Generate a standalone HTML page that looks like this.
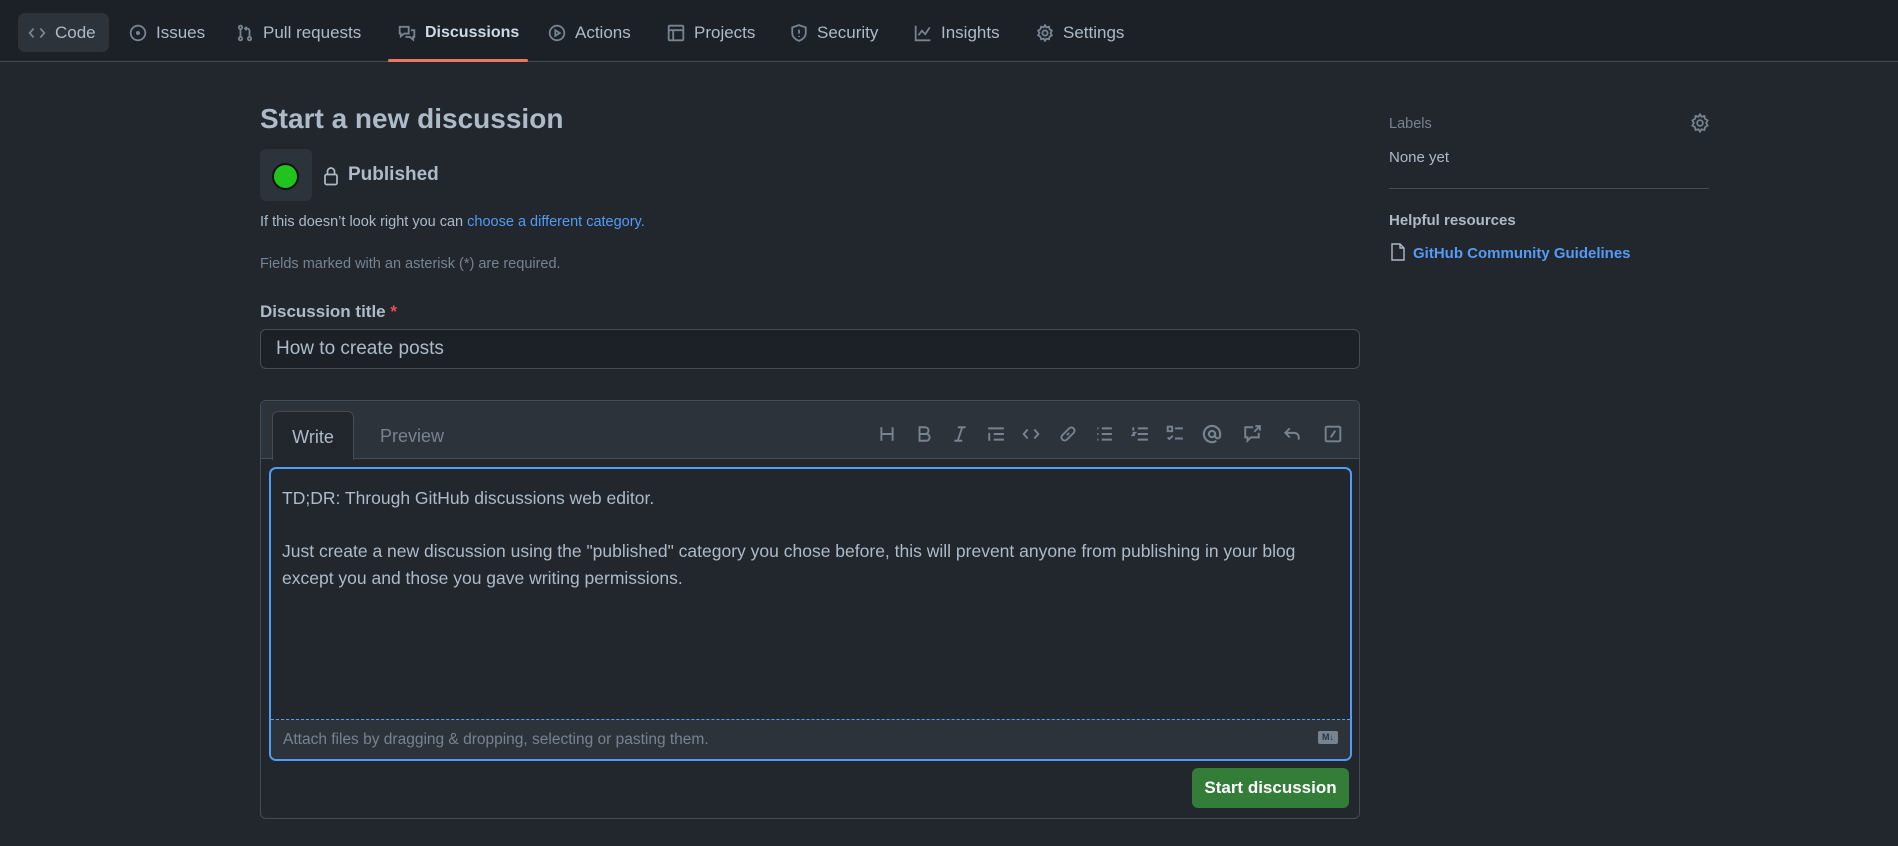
<!DOCTYPE html>
<html><head><meta charset="utf-8"><style>
*{box-sizing:border-box;margin:0;padding:0}
body{width:1898px;height:846px;background:#22272e;font-family:"Liberation Sans",sans-serif;color:#adbac7;position:relative;overflow:hidden}
.hdr{position:absolute;left:0;top:0;width:1898px;height:62px;background:#1c2128;border-bottom:1px solid #444c56}
.tab{position:absolute;top:13px;height:39px;display:flex;align-items:center;font-size:17px;color:#adbac7;gap:9px}
.tab svg{width:18px;height:18px;fill:none;stroke:#768390;stroke-width:1.6}
.abs{position:absolute}
.ic svg{fill:none;stroke:#768390;stroke-width:1.7}
</style></head><body>
<div class="hdr">
<div class="abs" style="left:18px;top:13px;width:91px;height:39px;background:#2d333b;border-radius:7px"></div>
<div class="tab" style="left:28px"><svg viewBox="0 0 16 16"><path d="M5 4L1.5 8 5 12M11 4l3.5 4L11 12"/></svg>Code</div>
<div class="tab" style="left:129px"><svg viewBox="0 0 16 16"><circle cx="8" cy="8" r="6.5"/><circle cx="8" cy="8" r="1" fill="#768390"/></svg>Issues</div>
<div class="tab" style="left:236px"><svg viewBox="0 0 16 16"><circle cx="4" cy="3" r="1.5"/><circle cx="4" cy="13" r="1.5"/><circle cx="12" cy="13" r="1.5"/><path d="M4 4.5v7M12 11.5V6a2 2 0 0 0-2-2H8M9.5 2.5L8 4l1.5 1.5"/></svg>Pull requests</div>
<div class="tab" style="left:398px;color:#cdd9e5;font-weight:bold;font-size:16px"><svg viewBox="0 0 16 16"><path d="M1.5 2.5h8v6h-4l-3 2.5v-2.5h-1zM11.5 5.5h3v6h-1v2.5l-3-2.5h-3v-1"/></svg>Discussions</div>
<div class="abs" style="left:388px;top:59px;width:140px;height:3px;background:#ec775c;border-radius:2px"></div>
<div class="tab" style="left:548px"><svg viewBox="0 0 16 16"><circle cx="8" cy="8" r="6.5"/><path d="M6.5 5.5v5l4-2.5z"/></svg>Actions</div>
<div class="tab" style="left:667px"><svg viewBox="0 0 16 16"><rect x="1.5" y="1.5" width="13" height="13" rx="1"/><path d="M1.5 5.5h13M5.5 5.5v9"/></svg>Projects</div>
<div class="tab" style="left:790px"><svg viewBox="0 0 16 16"><path d="M8 1l6 2v5c0 3.5-3 6-6 7-3-1-6-3.5-6-7V3z"/><path d="M8 5v3.5M8 10.5v1"/></svg>Security</div>
<div class="tab" style="left:914px"><svg viewBox="0 0 16 16"><path d="M1.5 1.5v13h13M4 10l3-4 3 3 4-6"/></svg>Insights</div>
<div class="tab" style="left:1036px"><svg viewBox="0 0 16 16"><circle cx="8" cy="8" r="2.3"/><path d="M8 1l1.2 2 2.3-.6.6 2.3 2 1.2-1.2 2.1 1.2 2.1-2 1.2-.6 2.3-2.3-.6L8 15l-1.2-2-2.3.6-.6-2.3-2-1.2L3.1 8 1.9 5.9l2-1.2.6-2.3 2.3.6z"/></svg>Settings</div>
</div>

<div class="abs" style="left:260px;top:103px;font-size:28px;font-weight:bold;color:#adbac7">Start a new discussion</div>
<div class="abs" style="left:260px;top:149px;width:52px;height:52px;background:#2d333b;border-radius:6px"></div>
<div class="abs" style="left:272px;top:163px;width:27px;height:27px;border-radius:50%;background:#1fc41f;border:2px solid #111"></div>
<svg class="abs" style="left:323px;top:166px" width="16" height="20" viewBox="0 0 16 20" fill="none" stroke="#adbac7" stroke-width="1.7"><rect x="2" y="8.5" width="12" height="10" rx="1.5"/><path d="M4.5 8.5V5.5a3.5 3.5 0 0 1 7 0v3"/></svg>
<div class="abs" style="left:348px;top:164px;font-size:19px;font-weight:bold;color:#adbac7">Published</div>
<div class="abs" style="left:260px;top:214px;font-size:14.5px;color:#adbac7">If this doesn’t look right you can <span style="color:#539bf5">choose a different category.</span></div>
<div class="abs" style="left:260px;top:256px;font-size:14.5px;color:#768390">Fields marked with an asterisk (*) are required.</div>
<div class="abs" style="left:260px;top:302px;font-size:17px;font-weight:bold;color:#adbac7">Discussion title <span style="color:#e5534b">*</span></div>
<div class="abs" style="left:260px;top:329px;width:1100px;height:40px;background:#1c2128;border:1px solid #444c56;border-radius:6px;font-size:19px;padding:8px 15px;color:#adbac7">How to create posts</div>

<div class="abs" style="left:260px;top:400px;width:1100px;height:419px;border:1px solid #444c56;border-radius:6px;background:#22272e"></div>
<div class="abs" style="left:261px;top:401px;width:1098px;height:58px;background:#2d333b;border-bottom:1px solid #444c56;border-radius:6px 6px 0 0"></div>
<div class="abs" style="left:272px;top:411px;width:82px;height:49px;background:#22272e;border:1px solid #444c56;border-bottom:none;border-radius:6px 6px 0 0;font-size:18px;color:#adbac7;text-align:center;padding-top:15px">Write</div>
<div class="abs" style="left:380px;top:426px;font-size:18px;color:#768390">Preview</div>
<div class="abs ic" style="left:0;top:0">
<svg class="abs" style="left:878px;top:425px" width="18" height="18" viewBox="0 0 16 16"><path d="M3 2v12M13 2v12M3 8h10"/></svg>
<svg class="abs" style="left:915px;top:425px" width="18" height="18" viewBox="0 0 16 16"><path d="M4 2h5a3 3 0 0 1 0 6H4zM4 8h6a3 3 0 0 1 0 6H4z"/></svg>
<svg class="abs" style="left:951px;top:425px" width="18" height="18" viewBox="0 0 16 16"><path d="M6 2h7M3 14h7M10 2L6 14"/></svg>
<svg class="abs" style="left:987px;top:425px" width="18" height="18" viewBox="0 0 16 16"><path d="M1 3h14M6 8h9M6 13h9M2 7v7"/></svg>
<svg class="abs" style="left:1022px;top:425px" width="18" height="18" viewBox="0 0 16 16"><path d="M5 4L1.5 8 5 12M11 4l3.5 4L11 12"/></svg>
<svg class="abs" style="left:1059px;top:425px" width="18" height="18" viewBox="0 0 16 16"><path d="M7 9l2-2M6 6l3-3a2.5 2.5 0 0 1 4 4l-3 3M10 10l-3 3a2.5 2.5 0 0 1-4-4l3-3"/></svg>
<svg class="abs" style="left:1095px;top:425px" width="18" height="18" viewBox="0 0 16 16"><path d="M6 3h9M6 8h9M6 13h9M2 3h1M2 8h1M2 13h1"/></svg>
<svg class="abs" style="left:1131px;top:425px" width="18" height="18" viewBox="0 0 16 16"><path d="M6 3h9M6 8h9M6 13h9M2 2v3M1.5 7h2l-2 2h2"/></svg>
<svg class="abs" style="left:1166px;top:425px" width="18" height="18" viewBox="0 0 16 16"><rect x="1.5" y="1.5" width="4" height="4"/><path d="M8 3h7M8 12h7M1.5 11l1.5 1.5 3-3"/></svg>
<svg class="abs" style="left:1202px;top:424px" width="20" height="20" viewBox="0 0 16 16"><circle cx="8" cy="8" r="2.5"/><path d="M10.5 8v1.5a2 2 0 0 0 4 0V8a6.5 6.5 0 1 0-3 5.5"/></svg>
<svg class="abs" style="left:1243px;top:425px" width="18" height="18" viewBox="0 0 16 16"><path d="M9 2H2v9h2v3l3-3h7V7M11 1h4v4M15 1l-5 5"/></svg>
<svg class="abs" style="left:1283px;top:425px" width="18" height="18" viewBox="0 0 16 16"><path d="M6 3L2 7l4 4M2 7h8a4 4 0 0 1 4 4v2"/></svg>
<svg class="abs" style="left:1324px;top:425px" width="18" height="18" viewBox="0 0 16 16"><rect x="1.5" y="1.5" width="13" height="13" rx="1"/><path d="M10 5l-4 6"/></svg>
</div>

<div class="abs" style="left:269px;top:467px;width:1083px;height:294px;border:2px solid #539bf5;border-radius:7px;background:#22272e;overflow:hidden">
<div style="position:absolute;left:0;top:250px;width:100%;height:44px;background:#2d333b;border-top:1px dashed #539bf5"></div>
<div style="position:absolute;left:11px;top:16px;font-size:17.5px;line-height:26.5px;color:#adbac7;white-space:pre">TD;DR: Through GitHub discussions web editor.

Just create a new discussion using the "published" category you chose before, this will prevent anyone from publishing in your blog
except you and those you gave writing permissions.</div>
<div style="position:absolute;left:12px;top:262px;font-size:15.5px;color:#768390">Attach files by dragging &amp; dropping, selecting or pasting them.</div>
<div style="position:absolute;right:12px;top:262px;width:20px;height:13px;background:#768390;border-radius:2px;font-size:9px;font-weight:bold;color:#2d333b;text-align:center;line-height:13px">M↓</div>
</div>
<div class="abs" style="left:1192px;top:768px;width:157px;height:40px;background:#347d39;border-radius:6px;color:#fff;font-weight:bold;font-size:17px;text-align:center;line-height:40px">Start discussion</div>

<div class="abs" style="left:1389px;top:116px;font-size:14.5px;color:#768390">Labels</div>
<svg class="abs" style="left:1690px;top:113px" width="20" height="20" viewBox="0 0 16 16" fill="none" stroke="#768390" stroke-width="1.4"><circle cx="8" cy="8" r="2.3"/><path d="M8 1l1.2 2 2.3-.6.6 2.3 2 1.2-1.2 2.1 1.2 2.1-2 1.2-.6 2.3-2.3-.6L8 15l-1.2-2-2.3.6-.6-2.3-2-1.2L3.1 8 1.9 5.9l2-1.2.6-2.3 2.3.6z"/></svg>
<div class="abs" style="left:1389px;top:149px;font-size:15px;color:#adbac7">None yet</div>
<div class="abs" style="left:1389px;top:188px;width:320px;height:1px;background:#444c56"></div>
<div class="abs" style="left:1389px;top:212px;font-size:15px;font-weight:bold;color:#adbac7">Helpful resources</div>
<svg class="abs" style="left:1391px;top:243px" width="14" height="18" viewBox="0 0 14 18" fill="none" stroke="#adbac7" stroke-width="1.4"><path d="M1 1h8l4 4v12H1zM9 1v4h4"/></svg>
<div class="abs" style="left:1413px;top:245px;font-size:15px;font-weight:bold;color:#539bf5">GitHub Community Guidelines</div>
</body></html>
